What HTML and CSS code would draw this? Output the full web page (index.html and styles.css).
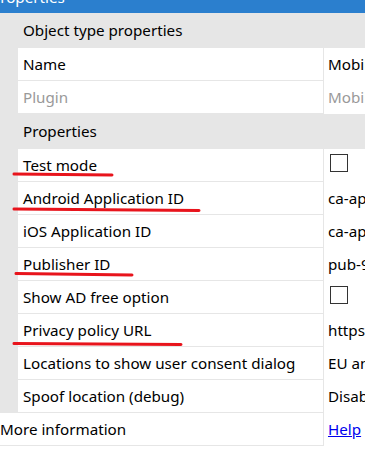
FILE: index.html
```html
<!DOCTYPE html>
<html lang="en">
<head>
    <meta charset="UTF-8">
    <meta name="viewport" content="width=device-width, initial-scale=1.0">
    <title>Properties</title>
    <link rel="stylesheet" href="styles.css">
</head>
<body>
    <div class="titlebar"><span>Properties</span></div>

    <div class="sheet">
        <div class="heading">Object type properties</div>
        <div class="row">
            <div class="name">Name</div>
            <div class="value">Mobile Advertising</div>
        </div>
        <div class="row muted">
            <div class="name">Plugin</div>
            <div class="value">Mobile Advertising</div>
        </div>

        <div class="heading">Properties</div>
        <div class="row">
            <div class="name">Test mode</div>
            <div class="value"><span class="checkbox"></span></div>
        </div>
        <div class="row">
            <div class="name">Android Application ID</div>
            <div class="value">ca-app-pub-0000000000000000~0000000000</div>
        </div>
        <div class="row">
            <div class="name">iOS Application ID</div>
            <div class="value">ca-app-pub-0000000000000000~0000000000</div>
        </div>
        <div class="row">
            <div class="name">Publisher ID</div>
            <div class="value">pub-9000000000000000</div>
        </div>
        <div class="row">
            <div class="name">Show AD free option</div>
            <div class="value"><span class="checkbox"></span></div>
        </div>
        <div class="row">
            <div class="name">Privacy policy URL</div>
            <div class="value">https://example.com/privacy</div>
        </div>
        <div class="row">
            <div class="name">Locations to show user consent dialog</div>
            <div class="value">EU and unknown</div>
        </div>
        <div class="row">
            <div class="name">Spoof location (debug)</div>
            <div class="value">Disabled</div>
        </div>
    </div>

    <div class="row info">
        <div class="name">More information</div>
        <div class="value"><a href="#">Help</a></div>
    </div>

    <!-- rote Markierungen -->
    <svg class="marks" width="365" height="452" viewBox="0 0 365 452">
        <path d="M14 174 L112 175"/>
        <path d="M14 209 L199 210.5"/>
        <path d="M16 273.5 L132 275"/>
        <path d="M14 343.5 L181 344.5"/>
    </svg>
</body>
</html>
```

FILE: styles.css
```css
body {
    margin: 0;
    font-family: "Noto Sans", "Open Sans", sans-serif;
    font-size: 15.2px;
    color: #000;
    background: #fff;
    position: relative;
    overflow: hidden;
}
.titlebar {
    height: 13px;
    background: #2b7fce;
    color: #fff;
    overflow: hidden;
}
.titlebar span {
    display: block;
    margin: -13px 0 0 -9px;
    line-height: 20px;
}
.sheet {
    background: #e6e6e6;
}
.heading {
    height: 35px;
    line-height: 35px;
    padding-left: 23px;
}
.row {
    display: grid;
    grid-template-columns: 306px 1fr;
    margin-left: 18px;
    background: #fff;
}
.name {
    height: 32px;
    line-height: 32px;
    padding-left: 5px;
    border-bottom: 1px solid #e6e6e6;
    border-right: 1px solid #e6e6e6;
    white-space: nowrap;
    overflow: hidden;
}
.value {
    padding-left: 4px;
    line-height: 32px;
    white-space: nowrap;
    overflow: hidden;
}
.muted {
    color: #999;
}
.checkbox {
    display: block;
    width: 16px;
    height: 16px;
    margin-top: 5px;
    margin-left: 2px;
    border: 1px solid #333;
}
.info {
    margin-left: 0;
    grid-template-columns: 324px 1fr;
}
.info .name {
    padding-left: 0;
}
.info a {
    color: #0000ee;
}
.marks {
    position: absolute;
    top: 0;
    left: 0;
    pointer-events: none;
}
.marks path {
    stroke: #e8141c;
    stroke-width: 3;
    stroke-linecap: round;
    fill: none;
}
```
